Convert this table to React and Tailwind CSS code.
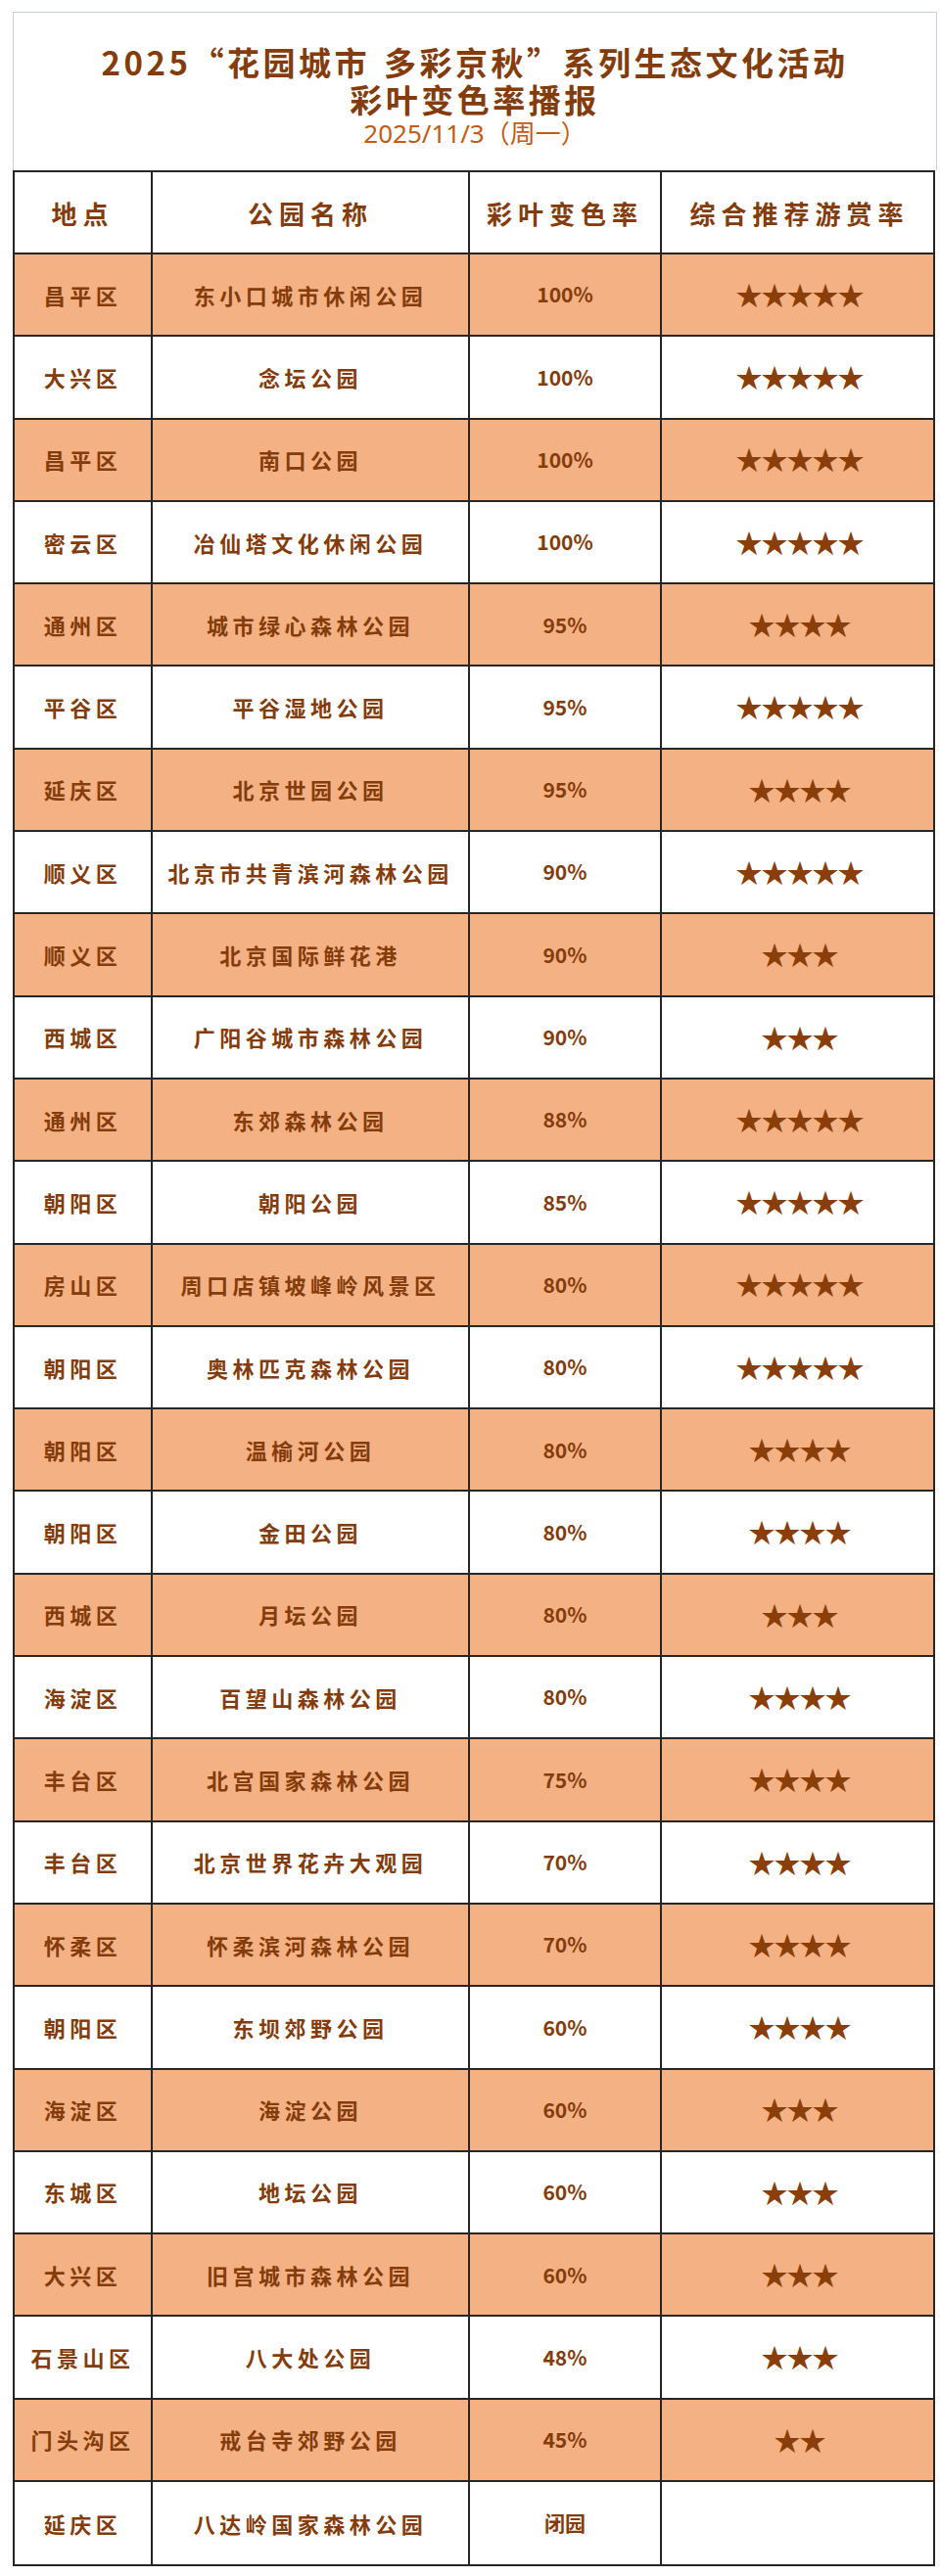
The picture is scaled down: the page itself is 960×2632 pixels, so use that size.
const rows = [
  ["昌平区", "东小口城市休闲公园", "100%", 5],
  ["大兴区", "念坛公园", "100%", 5],
  ["昌平区", "南口公园", "100%", 5],
  ["密云区", "冶仙塔文化休闲公园", "100%", 5],
  ["通州区", "城市绿心森林公园", "95%", 4],
  ["平谷区", "平谷湿地公园", "95%", 5],
  ["延庆区", "北京世园公园", "95%", 4],
  ["顺义区", "北京市共青滨河森林公园", "90%", 5],
  ["顺义区", "北京国际鲜花港", "90%", 3],
  ["西城区", "广阳谷城市森林公园", "90%", 3],
  ["通州区", "东郊森林公园", "88%", 5],
  ["朝阳区", "朝阳公园", "85%", 5],
  ["房山区", "周口店镇坡峰岭风景区", "80%", 5],
  ["朝阳区", "奥林匹克森林公园", "80%", 5],
  ["朝阳区", "温榆河公园", "80%", 4],
  ["朝阳区", "金田公园", "80%", 4],
  ["西城区", "月坛公园", "80%", 3],
  ["海淀区", "百望山森林公园", "80%", 4],
  ["丰台区", "北宫国家森林公园", "75%", 4],
  ["丰台区", "北京世界花卉大观园", "70%", 4],
  ["怀柔区", "怀柔滨河森林公园", "70%", 4],
  ["朝阳区", "东坝郊野公园", "60%", 4],
  ["海淀区", "海淀公园", "60%", 3],
  ["东城区", "地坛公园", "60%", 3],
  ["大兴区", "旧宫城市森林公园", "60%", 3],
  ["石景山区", "八大处公园", "48%", 3],
  ["门头沟区", "戒台寺郊野公园", "45%", 2],
  ["延庆区", "八达岭国家森林公园", "闭园", 0],
];

const font = { fontFamily: '"Noto Sans CJK SC", "Noto Sans", sans-serif' };
const dateFont = { fontFamily: '"Noto Sans", "Noto Sans CJK SC", sans-serif' };

const cols = "grid grid-cols-[141px_324px_196px_281px]";

function Cell({ children, last, className = "" }) {
  return (
    <div
      className={`flex items-center justify-center ${last ? "" : "border-r-2 border-[#262626]"} ${className}`}
    >
      {children}
    </div>
  );
}

export default function App() {
  return (
    <div className="w-[960px] h-[2632px] bg-white pt-3" style={font}>
      <div className="ml-[13px] w-[944px]">
        <div className="h-[162px] border-t border-l border-r border-[#c5cee2] flex flex-col items-center pt-[31px]">
          <div className="text-[33px] leading-[38px] font-bold text-[#843c0c] tracking-[3.5px] whitespace-nowrap">
            2025“花园城市<span className="inline-block w-[14px]"></span>多彩京秋”系列生态文化活动
          </div>
          <div className="text-[33px] leading-[38px] font-bold text-[#843c0c] tracking-[3.5px]">
            彩叶变色率播报
          </div>
          <div className="text-[26px] leading-[32px] text-[#c55a11]" style={dateFont}>
            2025/11/3（周一）
          </div>
        </div>
        <div className="w-[942px] border-2 border-[#262626] text-[#843c0c]">
          <div className={`${cols} h-[84px] border-b-2 border-[#262626] bg-white font-bold text-[26px] tracking-[6px]`}>
            <Cell>地点</Cell>
            <Cell>公园名称</Cell>
            <Cell>彩叶变色率</Cell>
            <Cell last>综合推荐游赏率</Cell>
          </div>
          {rows.map(([area, park, rate, stars], i) => (
            <div
              key={i}
              className={`${cols} h-[84.3px] ${i < rows.length - 1 ? "border-b-2 border-[#262626]" : ""} ${i % 2 === 0 ? "bg-[#f4b183]" : "bg-white"} font-bold text-[22px]`}
            >
              <Cell className="tracking-[4.5px]">{area}</Cell>
              <Cell className="tracking-[4.5px]">{park}</Cell>
              <Cell className="text-[21px]">{rate}</Cell>
              <Cell last className="text-[27px] tracking-[-1px] text-[#8a3e0a]">
                {"★".repeat(stars)}
              </Cell>
            </div>
          ))}
        </div>
      </div>
    </div>
  );
}
